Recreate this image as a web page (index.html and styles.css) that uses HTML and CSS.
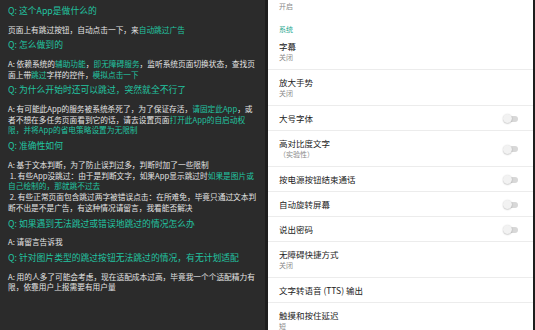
FILE: index.html
```html
<!DOCTYPE html>
<html lang="zh-CN">
<head>
<meta charset="utf-8">
<title>FAQ</title>
<link rel="stylesheet" href="styles.css">
</head>
<body>
<div class="screen">
  <div class="faq">
    <p class="q">Q: 这个App是做什么的</p>
    <p class="a">页面上有跳过按钮，自动点击一下，来<span class="hl">自动跳过广告</span></p>
    <p class="q">Q: 怎么做到的</p>
    <p class="a">A: 依赖系统的<span class="hl">辅助功能</span>，<span class="hl">即无障碍服务</span>，监听系统页面切换状态，查找页面上带<span class="hl">跳过</span>字样的控件，<span class="hl">模拟点击一下</span></p>
    <p class="q">Q: 为什么开始时还可以跳过，突然就全不行了</p>
    <p class="a">A: 有可能此App的服务被系统杀死了，为了保证存活，<span class="hl">请固定此App</span>，或者不想在多任务页面看到它的话，请去设置页面<span class="hl">打开此App的自启动权限，并将App的省电策略设置为无限制</span></p>
    <p class="q">Q: 准确性如何</p>
    <p class="a">A: 基于文本判断，为了防止误判过多，判断时加了一些限制<br>&nbsp;1. 有些App没跳过：由于是判断文字，如果App显示跳过时<span class="hl">如果是图片或自己绘制的，那就跳不过去</span><br>&nbsp;2. 有些正常页面包含跳过两字被错误点击：在所难免，毕竟只通过文本判断不出是不是广告，有这种情况请留言，我看能否解决</p>
    <p class="q">Q: 如果遇到无法跳过或错误地跳过的情况怎么办</p>
    <p class="a">A: 请留言告诉我</p>
    <p class="q">Q: 针对图片类型的跳过按钮无法跳过的情况，有无计划适配</p>
    <p class="a">A: 用的人多了可能会考虑，现在适配成本过高，毕竟我一个个适配精力有限，依靠用户上报需要有用户量</p>
  </div>
  <div class="settings">
    <div class="top-sum">开启</div>
    <div class="category">系统</div>
    <div class="row"><div class="texts"><div class="title">字幕</div><div class="sum">关闭</div></div></div>
    <div class="row"><div class="texts"><div class="title">放大手势</div><div class="sum">关闭</div></div></div>
    <div class="row"><div class="texts"><div class="title">大号字体</div></div><span class="switch"></span></div>
    <div class="row"><div class="texts"><div class="title">高对比度文字</div><div class="sum">（实验性）</div></div><span class="switch"></span></div>
    <div class="row"><div class="texts"><div class="title">按电源按钮结束通话</div></div><span class="switch"></span></div>
    <div class="row"><div class="texts"><div class="title">自动旋转屏幕</div></div><span class="switch"></span></div>
    <div class="row"><div class="texts"><div class="title">说出密码</div></div><span class="switch"></span></div>
    <div class="row"><div class="texts"><div class="title">无障碍快捷方式</div><div class="sum">关闭</div></div></div>
    <div class="row"><div class="texts"><div class="title">文字转语音 (TTS) 输出</div></div></div>
    <div class="row"><div class="texts"><div class="title">触摸和按住延迟</div><div class="sum">短</div></div></div>
  </div>
</div>
</body>
</html>
```
FILE: styles.css
```css
html, body {
  margin: 0;
  padding: 0;
}
body {
  font-family: "Noto Sans CJK SC", "Noto Sans", sans-serif;
  background: #1e1e1e;
}
.screen {
  display: flex;
  gap: 3px;
  width: 535px;
  height: 330px;
  overflow: hidden;
  background: #1e1e1e;
}
.faq {
  width: 265px;
  flex: none;
  box-sizing: border-box;
  padding: 5px 7px 0 8px;
  background: #2b2b2b;
  color: #e4e4e4;
}
.faq p {
  margin: 0;
}
.faq .q {
  font-size: 8.8px;
  line-height: 12px;
  color: #22c4a1;
  margin-bottom: 7.5px;
}
.faq .a {
  font-size: 7.7px;
  line-height: 10.8px;
  margin-bottom: 4px;
}
.hl {
  color: #22c4a1;
}
.settings {
  width: 265px;
  flex: none;
  background: #ffffff;
  display: flex;
  flex-direction: column;
}
.top-sum {
  font-size: 7px;
  line-height: 12px;
  color: #8a8a8a;
  padding-left: 11px;
}
.category {
  font-size: 7px;
  line-height: 9px;
  color: #1fa88f;
  padding: 13px 0 0 11px;
}
.row {
  display: flex;
  align-items: center;
  justify-content: space-between;
  padding: 7px 15px 6px 11px;
  border-bottom: 1px solid #ececec;
}
.title {
  font-size: 8.5px;
  line-height: 11px;
  color: #222222;
}
.sum {
  font-size: 7px;
  line-height: 11px;
  color: #8a8a8a;
}
.switch {
  position: relative;
  width: 13px;
  height: 6px;
  border-radius: 3px;
  background: #d8d8d8;
}
.switch::after {
  content: "";
  position: absolute;
  left: -2px;
  top: -1.5px;
  width: 9px;
  height: 9px;
  border-radius: 50%;
  background: #f2f2f2;
  box-shadow: 0 0.5px 1.5px rgba(0, 0, 0, 0.3);
}
```
